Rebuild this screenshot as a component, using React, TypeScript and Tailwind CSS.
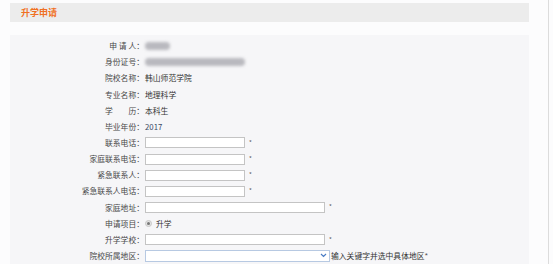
import { ReactNode } from 'react';

type Row = {
  label: ReactNode
  kind: 'text' | 'blur' | 'input' | 'wide' | 'radio' | 'select'
  value?: string
  blurW?: number
}

const rows: Row[] = [
  { label: '申 请 人：', kind: 'blur', blurW: 25 },
  { label: '身份证号：', kind: 'blur', blurW: 100 },
  { label: '院校名称：', kind: 'text', value: '韩山师范学院' },
  { label: '专业名称：', kind: 'text', value: '地理科学' },
  { label: '学　　历：', kind: 'text', value: '本科生' },
  { label: '毕业年份：', kind: 'text', value: '2017' },
  { label: '联系电话：', kind: 'input' },
  { label: '家庭联系电话：', kind: 'input' },
  { label: '紧急联系人：', kind: 'input' },
  { label: '紧急联系人电话：', kind: 'input' },
  { label: '家庭地址：', kind: 'wide' },
  { label: '申请项目：', kind: 'radio' },
  { label: '升学学校：', kind: 'wide' },
  { label: '院校所属地区：', kind: 'select' },
];

function Field({ row }: { row: Row }) {
  if (row.kind === 'text') {
    return <span className={row.value === '2017' ? 'text-[#3b4a66]' : 'text-[#333]'}>{row.value}</span>;
  }
  if (row.kind === 'blur') {
    return <div className="h-[8px] bg-[#b9b9bf] blur-[1.5px] rounded-sm" style={{ width: row.blurW }} />;
  }
  if (row.kind === 'input' || row.kind === 'wide') {
    return (
      <div className="flex items-center gap-[4px]">
        <div className={`h-[11px] bg-white border border-[#c4c4c4] ${row.kind === 'wide' ? 'w-[180px]' : 'w-[100px]'}`} />
        <span className="text-[#555] text-[6px] leading-none">*</span>
      </div>
    );
  }
  if (row.kind === 'radio') {
    return (
      <div className="flex items-center gap-[4px]">
        <div className="w-[7px] h-[7px] rounded-full bg-[#e4e4e4] border border-[#c8c8c8] flex items-center justify-center">
          <div className="w-[3px] h-[3px] rounded-full bg-[#777]" />
        </div>
        <span className="text-[#333]">升学</span>
      </div>
    );
  }
  return (
    <div className="flex items-center gap-[1px]">
      <div className="h-[12px] w-[185px] bg-white border border-[#b7c9e2] flex items-center justify-end pr-[2px]">
        <svg width="7" height="5" viewBox="0 0 7 5">
          <path d="M1 1l2.5 2.5L6 1" stroke="#4a7cc4" strokeWidth="1.2" fill="none" />
        </svg>
      </div>
      <span className="text-[#333]">输入关键字并选中具体地区<span className="text-[#555]">*</span></span>
    </div>
  );
}

export default function App() {
  return (
    <main className="relative w-[553px] h-[264px] bg-[#fcfcfd] overflow-hidden" style={{ fontFamily: '"Noto Sans CJK SC", "Liberation Sans", sans-serif' }}>
      <div className="absolute top-0 bottom-0 left-[548px] w-[1px] bg-[#dcdcdc]" />
      <div className="pl-[10px] pt-[3px] w-[529px]">
        <div className="h-[19px] bg-[#ececec] flex items-center pl-[11px]">
          <span className="text-[#f07023] text-[9px] font-bold leading-none">升学申请</span>
        </div>
        <section className="mt-[13px] bg-[#f6f6f8] pt-[3px] h-[240px] text-[7.8px] leading-none">
          {rows.map((row, i) => (
            <div key={i} className="flex items-center h-[16.15px]">
              <div className="w-[135px] text-right text-[#484848] pr-[1px]">{row.label}</div>
              <div className="pl-[0px]">
                <Field row={row} />
              </div>
            </div>
          ))}
        </section>
      </div>
    </main>
  );
}
